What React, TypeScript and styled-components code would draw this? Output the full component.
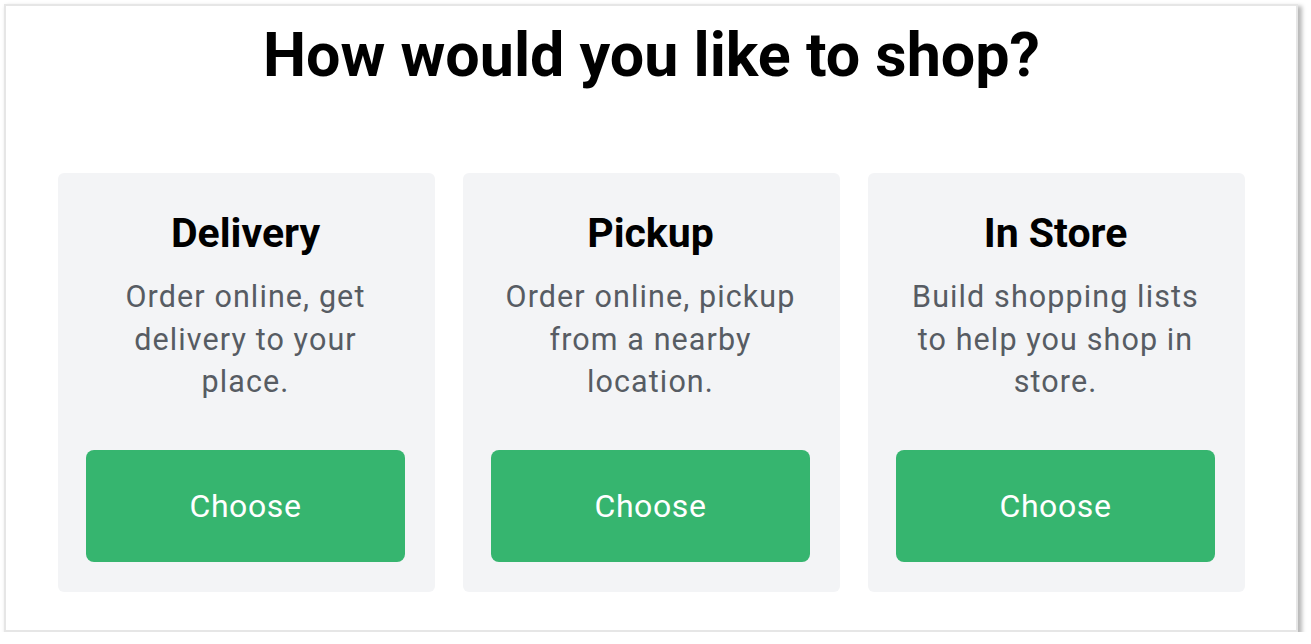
import { createGlobalStyle, styled } from "styled-components";

const GlobalStyle = createGlobalStyle`
  html, body {
    margin: 0;
    padding: 0;
    background: #ffffff;
  }
  body {
    font-family: Roboto, "Liberation Sans", Arial, sans-serif;
  }
`;

const Frame = styled.div`
  box-sizing: border-box;
  margin: 4px 0 0 4px;
  width: 1294px;
  height: 628px;
  border: 2px solid #e6e6e6;
  background: #ffffff;
  box-shadow: 3px 3px 4px 1px rgba(0, 0, 0, 0.28);
  padding: 0 51px 0 52px;
  display: flex;
  flex-direction: column;
  align-items: stretch;
`;

const Title = styled.h1`
  margin: 15px 0 0;
  font-size: 61px;
  line-height: 68px;
  font-weight: 700;
  color: #000000;
  text-align: center;
`;

const CardRow = styled.div`
  margin-top: 84px;
  display: grid;
  grid-template-columns: repeat(3, 1fr);
  gap: 28px;
`;

const Card = styled.div`
  box-sizing: border-box;
  height: 419px;
  background: #f3f4f6;
  border-radius: 6px;
  padding: 35px 30px 30px 28px;
  display: flex;
  flex-direction: column;
  align-items: center;
  text-align: center;
`;

const CardTitle = styled.h2`
  margin: 0;
  font-size: 41px;
  line-height: 50px;
  font-weight: 700;
  color: #000000;
`;

const CardText = styled.p`
  margin: 18px 0 0;
  padding: 0 8px;
  font-size: 30.5px;
  line-height: 42.5px;
  letter-spacing: 1.1px;
  color: #575c63;
`;

const ChooseButton = styled.button`
  margin-top: auto;
  width: 100%;
  height: 112px;
  border: none;
  border-radius: 8px;
  background: #36b56f;
  color: #ffffff;
  font-family: inherit;
  font-size: 32px;
  font-weight: 400;
  letter-spacing: 0.6px;
  cursor: pointer;
`;

const options = [
  { title: "Delivery", text: "Order online, get delivery to your place." },
  { title: "Pickup", text: "Order online, pickup from a nearby location." },
  { title: "In Store", text: "Build shopping lists to help you shop in store." },
];

export default function App() {
  return (
    <>
      <GlobalStyle />
      <Frame>
        <Title>How would you like to shop?</Title>
        <CardRow>
          {options.map((o) => (
            <Card key={o.title}>
              <CardTitle>{o.title}</CardTitle>
              <CardText>{o.text}</CardText>
              <ChooseButton>Choose</ChooseButton>
            </Card>
          ))}
        </CardRow>
      </Frame>
    </>
  );
}
